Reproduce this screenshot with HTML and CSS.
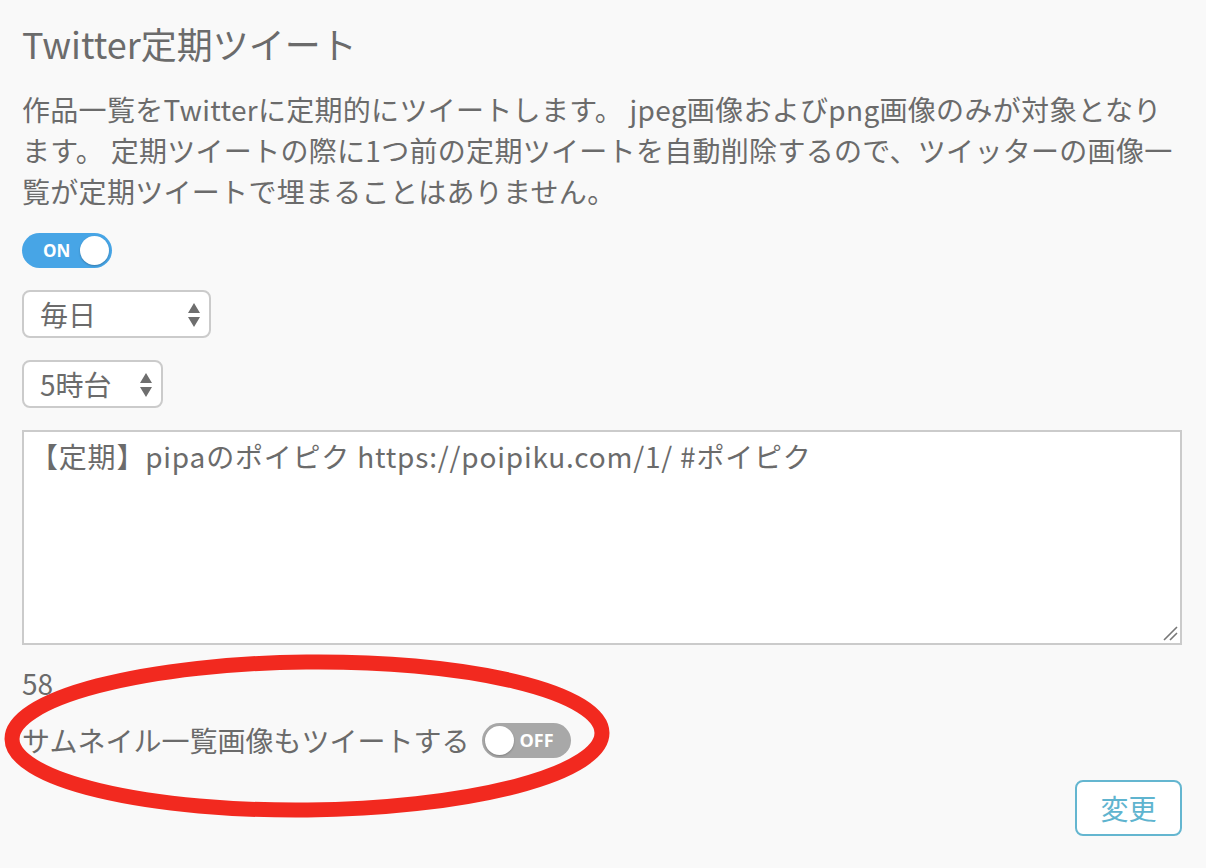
FILE: index.html
```html
<!DOCTYPE html>
<html lang="ja">
<head>
<meta charset="utf-8">
<link rel="stylesheet" href="styles.css">
</head>
<body>
<div class="page">
  <h1 class="title">Twitter定期ツイート</h1>
  <p class="desc">作品一覧をTwitterに定期的にツイートします。 jpeg画像およびpng画像のみが対象となります。 定期ツイートの際に1つ前の定期ツイートを自動削除するので、ツイッターの画像一覧が定期ツイートで埋まることはありません。</p>
  <div class="row first">
    <span class="toggle on"><span class="tlabel">ON</span><span class="knob"></span></span>
  </div>
  <div class="row">
    <span class="select wide"><span class="sval">毎日</span>
      <svg class="arrows" width="14" height="26" viewBox="0 0 14 26"><path d="M7 1 L13 11 L1 11 Z M1 15 L13 15 L7 25 Z" fill="#6e6e6e"/></svg>
    </span>
  </div>
  <div class="row">
    <span class="select narrow"><span class="sval">5時台</span>
      <svg class="arrows" width="14" height="26" viewBox="0 0 14 26"><path d="M7 1 L13 11 L1 11 Z M1 15 L13 15 L7 25 Z" fill="#6e6e6e"/></svg>
    </span>
  </div>
  <div class="tawrap">
    <div class="textarea">【定期】pipaのポイピク https://poipiku.com/1/ #ポイピク</div>
    <svg class="grip" width="16" height="16" viewBox="0 0 16 16"><path d="M15 2 L2 15 M15 8 L8 15" stroke="#777" stroke-width="1.6" fill="none"/></svg>
  </div>
  <div class="count">58</div>
  <div class="thumbrow">
    <span>サムネイル一覧画像もツイートする</span>
    <span class="toggle off"><span class="knob"></span><span class="tlabel">OFF</span></span>
  </div>
  <div class="btnrow">
    <span class="btn">変更</span>
  </div>
  <svg class="ellipse" width="640" height="190" viewBox="0 0 640 190"><ellipse cx="307" cy="89" rx="295" ry="74" fill="none" stroke="#f2291f" stroke-width="15" transform="rotate(-0.6 307 89)"/></svg>
</div>
</body>
</html>
```
FILE: styles.css
```css
html, body {
  margin: 0;
  padding: 0;
  background: #f9f9f9;
}
body {
  font-family: "Noto Sans CJK JP", sans-serif;
  color: #6b6b6b;
}
.page {
  position: relative;
  width: 1160px;
  padding: 0 22px;
}
.title {
  margin: 0;
  padding-top: 18px;
  font-size: 36px;
  font-weight: 400;
  line-height: 50px;
}
.desc {
  margin: 21px 0 0;
  font-size: 28px;
  line-height: 41px;
  letter-spacing: 0.3px;
}
.row {
  display: flex;
}
.row.first { margin-top: 21px; }
.toggle {
  display: inline-flex;
  align-items: center;
  box-sizing: border-box;
  height: 35px;
  border-radius: 18px;
  padding: 0 3px;
  font-family: "Open Sans", sans-serif;
  font-weight: 700;
  color: #fff;
}
.toggle.on {
  width: 90px;
  background: #47a5e6;
  padding-left: 21px;
  justify-content: space-between;
}
.toggle.off {
  width: 89px;
  background: #a8a8a8;
  gap: 5px;
}
.tlabel {
  font-size: 17px;
  line-height: 1;
}
.toggle.off .tlabel {
  font-size: 18px;
}
.knob {
  width: 29px;
  height: 29px;
  border-radius: 50%;
  background: #fff;
  box-shadow: 0 1px 2px rgba(0,0,0,0.25);
}
.select {
  position: relative;
  display: inline-flex;
  align-items: center;
  box-sizing: border-box;
  height: 48px;
  margin-top: 22px;
  border: 2px solid #cbcbcb;
  border-radius: 8px;
  background: #fff;
  padding-left: 16px;
  font-size: 28px;
}
.select.wide { width: 189px; }
.select.narrow { width: 141px; }
.arrows {
  position: absolute;
  right: 8px;
  top: 10px;
}
.tawrap {
  position: relative;
  margin-top: 22px;
}
.textarea {
  box-sizing: border-box;
  height: 215px;
  border: 2px solid #cbcbcb;
  background: #fff;
  padding: 4px 4px 4px 6px;
  font-size: 28px;
  line-height: 40px;
  letter-spacing: 0.8px;
}
.grip {
  position: absolute;
  right: 4px;
  bottom: 4px;
}
.count {
  margin-top: 21px;
  font-size: 28px;
  line-height: 34px;
}
.thumbrow {
  display: flex;
  align-items: center;
  gap: 13px;
  margin-top: 18px;
  font-size: 28px;
  line-height: 44px;
}
.btnrow {
  display: flex;
  justify-content: flex-end;
  margin-top: 18px;
}
.btn {
  display: inline-flex;
  align-items: center;
  justify-content: center;
  box-sizing: border-box;
  width: 107px;
  height: 56px;
  border: 2px solid #64b6d0;
  border-radius: 8px;
  background: #fff;
  color: #5fb4cf;
  font-size: 28px;
}
.ellipse {
  position: absolute;
  left: 0;
  top: 647px;
  pointer-events: none;
}
```
